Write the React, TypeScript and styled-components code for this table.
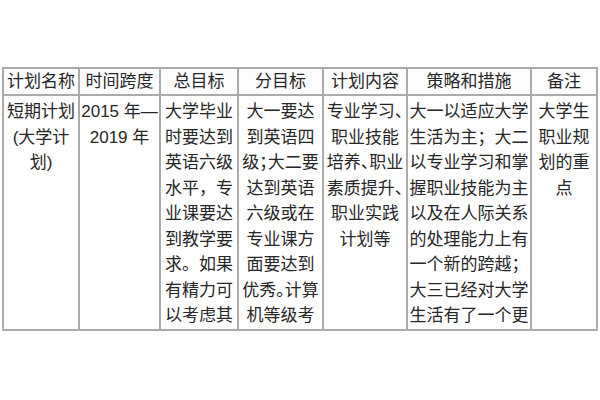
import React from "react";
import styled, { createGlobalStyle } from "styled-components";

const Global = createGlobalStyle`
  html, body { margin: 0; padding: 0; background: #ffffff; }
  body { font-family: "Liberation Sans", "Noto Sans CJK SC", sans-serif; }
`;

const Page = styled.div`
  width: 600px;
  height: 400px;
  padding: 67px 0 0 2px;
  box-sizing: border-box;
  overflow: hidden;
`;

const Grid = styled.div`
  display: grid;
  grid-template-columns: 74px 79px 76px 83px 82px 122px 64px;
  grid-template-rows: 25px 233px;
  gap: 2px;
  padding: 2px;
  width: fit-content;
  background: #ababab;
  color: #262626;
  font-family: "Liberation Sans", "Noto Sans CJK SC", sans-serif;
  font-size: 17px;
`;

const HeadCell = styled.div`
  background: #fdfdfd;
  display: flex;
  align-items: center;
  justify-content: center;
  white-space: nowrap;
  line-height: 25px;
`;

const BodyCell = styled.div<{ $compact?: boolean }>`
  background: #ffffff;
  padding-top: 3px;
  text-align: center;
  white-space: pre;
  line-height: 25.5px;
  overflow: hidden;
  font-feature-settings: ${(p) => (p.$compact ? '"halt"' : "normal")};
`;

const headers = ["计划名称", "时间跨度", "总目标", "分目标", "计划内容", "策略和措施", "备注"];

const body: { text: string; compact?: boolean }[] = [
  { text: "短期计划\n(大学计\n划)" },
  { text: "2015 年—\n2019 年" },
  { text: "大学毕业\n时要达到\n英语六级\n水平，专\n业课要达\n到教学要\n求。如果\n有精力可\n以考虑其" },
  { text: "大一要达\n到英语四\n级；大二要\n达到英语\n六级或在\n专业课方\n面要达到\n优秀。计算\n机等级考", compact: true },
  { text: "专业学习、\n职业技能\n培养、职业\n素质提升、\n职业实践\n计划等", compact: true },
  { text: "大一以适应大学\n生活为主；大二\n以专业学习和掌\n握职业技能为主\n以及在人际关系\n的处理能力上有\n一个新的跨越；\n大三已经对大学\n生活有了一个更" },
  { text: "大学生\n职业规\n划的重\n点" },
];

export default function App() {
  return (
    <>
      <Global />
      <Page>
        <Grid>
          {headers.map((h) => (
            <HeadCell key={h}>{h}</HeadCell>
          ))}
          {body.map((c, i) => (
            <BodyCell key={i} $compact={c.compact}>
              {c.text}
            </BodyCell>
          ))}
        </Grid>
      </Page>
    </>
  );
}
